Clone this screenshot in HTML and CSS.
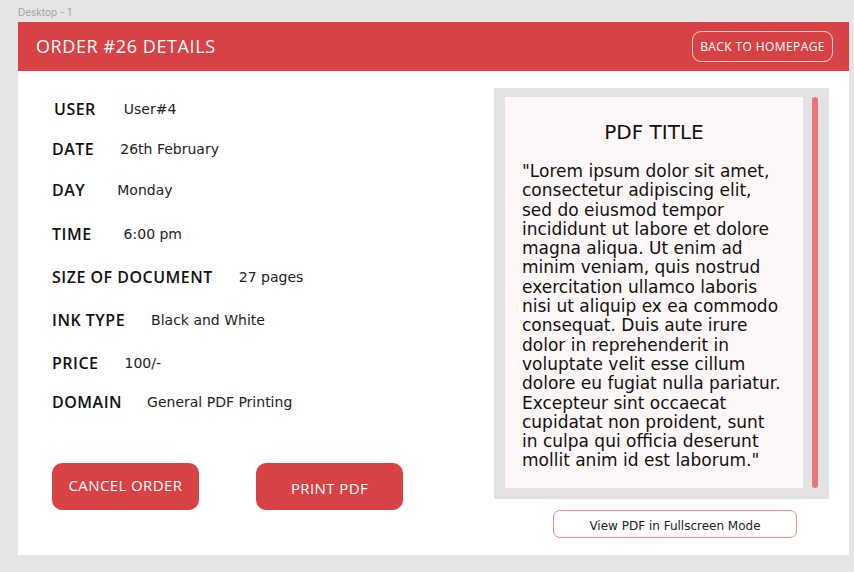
FILE: index.html
```html
<!DOCTYPE html>
<html lang="en">
<head>
<meta charset="utf-8">
<title>Order #26 Details</title>
<link rel="stylesheet" href="styles.css">
</head>
<body>
<div class="canvas-label">Desktop - 1</div>
<div class="frame">
  <header class="header">
    <h1 class="title">ORDER #26 DETAILS</h1>
    <button class="back-btn">BACK TO HOMEPAGE</button>
  </header>
  <main class="main">
    <section class="details">
      <div class="rows">
        <div class="row row-user"><span class="label">USER</span><span class="value">User#4</span></div>
        <div class="row row-date"><span class="label">DATE</span><span class="value">26th February</span></div>
        <div class="row row-day"><span class="label">DAY</span><span class="value">Monday</span></div>
        <div class="row row-time"><span class="label">TIME</span><span class="value">6:00 pm</span></div>
        <div class="row row-size"><span class="label">SIZE OF DOCUMENT</span><span class="value">27 pages</span></div>
        <div class="row row-ink"><span class="label">INK TYPE</span><span class="value">Black and White</span></div>
        <div class="row row-price"><span class="label">PRICE</span><span class="value">100/-</span></div>
        <div class="row row-domain"><span class="label">DOMAIN</span><span class="value">General PDF Printing</span></div>
      </div>
      <div class="actions">
        <button class="action-btn cancel">CANCEL ORDER</button>
        <button class="action-btn print">PRINT PDF</button>
      </div>
    </section>
    <section class="preview">
      <div class="viewer">
        <div class="page">
          <h2 class="pdf-title">PDF TITLE</h2>
          <p class="pdf-text">"Lorem ipsum dolor sit amet,<br>consectetur adipiscing elit,<br>sed do eiusmod tempor<br>incididunt ut labore et dolore<br>magna aliqua. Ut enim ad<br>minim veniam, quis nostrud<br>exercitation ullamco laboris<br>nisi ut aliquip ex ea commodo<br>consequat. Duis aute irure<br>dolor in reprehenderit in<br>voluptate velit esse cillum<br>dolore eu fugiat nulla pariatur.<br>Excepteur sint occaecat<br>cupidatat non proident, sunt<br>in culpa qui officia deserunt<br>mollit anim id est laborum."</p>
        </div>
        <div class="scrollbar"></div>
      </div>
      <button class="fullscreen-btn">View PDF in Fullscreen Mode</button>
    </section>
  </main>
</div>
</body>
</html>
```

FILE: styles.css
```css
* { box-sizing: border-box; }

body {
  margin: 0;
  background: #e5e5e5;
  font-family: "DejaVu Sans", "Open Sans", sans-serif;
  color: #111;
  width: 854px;
  height: 572px;
  overflow: hidden;
}

.canvas-label {
  height: 22px;
  padding: 6px 0 0 18px;
  font-family: "Inter", "Liberation Sans", sans-serif;
  font-size: 10px;
  color: #a3a3a3;
}

.frame {
  margin-left: 18px;
  width: 831px;
  height: 533px;
  background: #fff;
}

.header {
  height: 49px;
  background: #d94245;
  display: flex;
  align-items: center;
  justify-content: space-between;
  padding: 0 16px 0 18px;
}

.title {
  margin: 0 0 1px 0;
  font-family: "Open Sans", sans-serif;
  font-weight: 400;
  font-size: 18px;
  color: #fff;
  letter-spacing: 0.6px;
}

.back-btn {
  width: 141px;
  height: 31px;
  margin-bottom: 1px;
  border: 1px solid rgba(255, 255, 255, 0.75);
  border-radius: 9px;
  background: transparent;
  color: #fff;
  font-family: "Open Sans", sans-serif;
  font-size: 12px;
  letter-spacing: 0.4px;
  padding: 0;
}

.main {
  display: flex;
  justify-content: space-between;
}

.details {
  padding: 28px 0 0 34px;
}

.rows {
  display: flex;
  flex-direction: column;
  gap: 20px;
}

.row {
  display: flex;
  align-items: center;
  height: 20px;
  gap: 26px;
}

.row-user { padding-left: 2px; gap: 28px; }
.row-day { gap: 32px; margin-top: 1px; }
.row-time { gap: 32px; margin-top: 4px; }
.row-size { margin-top: 3px; }
.row-ink { margin-top: 3px; }
.row-price { margin-top: 3px; }
.row-domain { gap: 25px; margin-top: -1px; }

.label {
  font-family: "Open Sans", sans-serif;
  font-weight: 600;
  font-size: 16px;
  letter-spacing: 0.5px;
  color: #111;
}

.value {
  font-family: "DejaVu Sans", sans-serif;
  font-size: 14px;
  color: #222;
}

.actions {
  display: flex;
  gap: 57px;
  margin-top: 51px;
}

.action-btn {
  width: 147px;
  height: 47px;
  border: none;
  border-radius: 10px;
  background: #d94245;
  color: #fff;
  font-family: "Open Sans", sans-serif;
  font-size: 15px;
  letter-spacing: 0.4px;
  padding: 0;
}

.cancel { padding-bottom: 3px; }
.print { padding-top: 3px; }

.preview {
  padding: 17px 20px 0 0;
  display: flex;
  flex-direction: column;
}

.viewer {
  width: 335px;
  height: 411px;
  background: #e3e3e3;
  padding: 9px 11px 11px 11px;
  display: flex;
  gap: 9px;
}

.page {
  width: 298px;
  height: 391px;
  background: #fdf8f7;
  padding: 23px 0 0 17px;
}

.pdf-title {
  margin: 0 0 18px -17px;
  text-align: center;
  font-family: "DejaVu Sans", sans-serif;
  font-weight: 400;
  font-size: 20px;
  line-height: 24px;
  color: #111;
}

.pdf-text {
  margin: 0;
  font-size: 17px;
  line-height: 19.3px;
  color: #111;
  white-space: nowrap;
}

.scrollbar {
  width: 6px;
  height: 391px;
  border-radius: 3px;
  background: #e87878;
}

.fullscreen-btn {
  margin: 11px 0 0 59px;
  width: 244px;
  height: 28px;
  border: 1px solid #f08a8a;
  border-radius: 7px;
  background: #fff;
  color: #222;
  font-family: "DejaVu Sans", sans-serif;
  font-size: 12px;
  padding: 3px 0 0 0;
}
```
